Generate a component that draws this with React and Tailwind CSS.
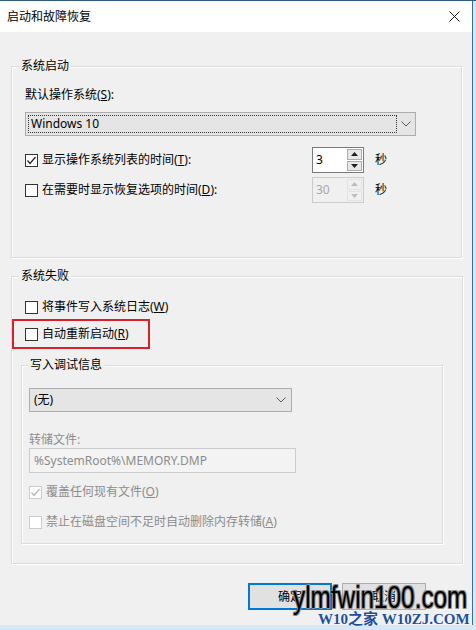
import React from "react";

const font = "font-['Noto_Sans','Noto_Sans_CJK_SC',sans-serif]";

const CheckBox = ({ checked, disabled }) => (
  <svg width="13" height="13" viewBox="0 0 13 13" className="shrink-0">
    <rect
      x="0.5"
      y="0.5"
      width="12"
      height="12"
      fill="#fff"
      stroke={disabled ? "#cccccc" : "#333333"}
    />
    {checked && (
      <polyline
        points="2.5,6.5 5,9.5 10.5,3"
        fill="none"
        stroke={disabled ? "#b5b5b5" : "#222222"}
        strokeWidth="1.2"
      />
    )}
  </svg>
);

const Check = ({ checked, disabled, children, className = "" }) => (
  <div className={`flex items-center h-[16px] ${className}`}>
    <CheckBox checked={checked} disabled={disabled} />
    <span className={`ml-[4px] whitespace-nowrap ${disabled ? "text-[#8c8c8c]" : "text-black"}`}>
      {children}
    </span>
  </div>
);

const Chevron = () => (
  <svg width="10" height="6" viewBox="0 0 10 6">
    <polyline points="0.5,0.5 5,5 9.5,0.5" fill="none" stroke="#5a5a5a" strokeWidth="1" />
  </svg>
);

const Spin = ({ value, disabled }) => (
  <div
    className={`flex h-[26px] w-[52px] border ${
      disabled ? "border-[#cccccc] bg-[#f0f0f0]" : "border-[#7a7a7a] bg-white"
    }`}
  >
    <div className={`flex-1 flex items-center pl-[3px] ${disabled ? "text-[#a8a8a8]" : "text-black"}`}>
      {value}
    </div>
    <div className="w-[17px] flex flex-col p-[1px] gap-[1px]">
      {["up", "down"].map((d) => (
        <div
          key={d}
          className={`flex-1 flex items-center justify-center border ${
            disabled ? "border-[#e3e3e3] bg-[#f0f0f0]" : "border-[#adadad] bg-[#e8e8e8]"
          }`}
        >
          <svg width="7" height="4" viewBox="0 0 7 4">
            <polygon
              points={d === "up" ? "3.5,0 7,4 0,4" : "0,0 7,0 3.5,4"}
              fill={disabled ? "#bdbdbd" : "#202020"}
            />
          </svg>
        </div>
      ))}
    </div>
  </div>
);

const Group = ({ label, labelLeft = "left-[7px]", className = "", children }) => (
  <div className={`relative border border-[#dcdcdc] shadow-[inset_1px_1px_0_#fff,1px_1px_0_#fff] ${className}`}>
    <span className={`absolute -top-[9px] ${labelLeft} px-[2px] bg-[#f0f0f0] leading-[16px]`}>
      {label}
    </span>
    {children}
  </div>
);

export default function App() {
  return (
    <div className={`relative w-[476px] h-[630px] overflow-hidden bg-[#d6e7f5] border-t border-[#2f5b82] text-[12px] leading-[16px] ${font}`}>
      <div className="w-[473px] h-[624px] bg-[#f0f0f0] border-r border-[#3d6a91] flex flex-col">
        {/* title bar */}
        <div className="h-[31px] bg-white flex items-center justify-between pl-[7px] pr-[12px]">
          <span className="text-[12px] text-black">启动和故障恢复</span>
          <svg width="11" height="11" viewBox="0 0 11 11">
            <path d="M0.5 0.5 L10.5 10.5 M10.5 0.5 L0.5 10.5" stroke="#111" strokeWidth="1" />
          </svg>
        </div>

        {/* 系统启动 */}
        <Group label="系统启动" className="mt-[34px] ml-[11px] w-[451px] h-[192px] pt-[20px] pl-[13px]">
          <div>
            默认操作系统(<span className="underline">S</span>):
          </div>
          <div className="mt-[9px] w-[391px] h-[24px] bg-[#e5e5e5] border border-[#adadad] flex items-center">
            <div className="ml-[2px] w-[369px] h-[18px] border border-dotted border-[#333] flex items-center pl-[2px]">
              Windows 10
            </div>
            <div className="flex-1 flex justify-center">
              <Chevron />
            </div>
          </div>
          <div className="mt-[11px] flex items-center h-[26px]">
            <Check checked className="w-[287px]">
              显示操作系统列表的时间(<span className="underline">T</span>):
            </Check>
            <Spin value="3" />
            <span className="ml-[11px]">秒</span>
          </div>
          <div className="mt-[4px] flex items-center h-[26px]">
            <Check className="w-[287px]">
              在需要时显示恢复选项的时间(<span className="underline">D</span>):
            </Check>
            <Spin value="30" disabled />
            <span className="ml-[11px]">秒</span>
          </div>
        </Group>

        {/* 系统失败 */}
        <Group label="系统失败" className="mt-[18px] ml-[11px] w-[452px] h-[288px] pt-[22px] pl-[13px]">
          <Check>
            将事件写入系统日志(<span className="underline">W</span>)
          </Check>
          <div className="mt-[4px] -ml-[13px] w-[138px] h-[30px] border-2 border-[#d8222b] flex items-center pl-[11px]">
            <Check>
              自动重新启动(<span className="underline">R</span>)
            </Check>
          </div>

          <Group
            label="写入调试信息"
            labelLeft="left-[6px]"
            className="mt-[16px] -ml-[4px] w-[422px] h-[179px] pt-[22px] pl-[7px]"
          >
            <div className="w-[263px] h-[24px] bg-[#e5e5e5] border border-[#adadad] flex items-center justify-between pl-[4px] pr-[5px]">
              <span>(无)</span>
              <Chevron />
            </div>
            <div className="mt-[20px] text-[#8c8c8c]">转储文件:</div>
            <div className="w-[267px] h-[25px] bg-[#f3f3f3] border border-[#cccccc] flex items-center pl-[4px] text-[#8c8c8c]">
              %SystemRoot%\MEMORY.DMP
            </div>
            <Check checked disabled className="mt-[11px]">
              覆盖任何现有文件(<span className="underline">O</span>)
            </Check>
            <Check disabled className="mt-[14px]">
              禁止在磁盘空间不足时自动删除内存转储(<span className="underline">A</span>)
            </Check>
          </Group>
        </Group>

        {/* buttons */}
        <div className="mt-[19px] ml-[248px] flex gap-[10px]">
          <button className="w-[84px] h-[27px] bg-[#e1e1e1] border-2 border-[#0078d7] flex items-center justify-center">
            确定
          </button>
          <button className="w-[84px] h-[27px] bg-[#e1e1e1] border border-[#adadad] flex items-center justify-center">
            取消
          </button>
        </div>
      </div>

      {/* watermark */}
      <div className="absolute left-[293px] top-[580px] origin-left scale-x-[0.76] text-[32px] leading-none font-['Liberation_Sans',sans-serif] text-black whitespace-nowrap [text-shadow:1px_1px_0_#8a8a8a,-1px_-1px_0_#8a8a8a,1px_-1px_0_#8a8a8a,-1px_1px_0_#8a8a8a]">
        ylmfwin100.com
      </div>
      <div className="absolute left-[318px] top-[610px] text-[15px] leading-[16px] font-bold font-['Liberation_Serif','Noto_Sans_CJK_SC',serif] text-[#1c4f9c] whitespace-nowrap [text-shadow:0_0_2px_#fff]">
        W10之家 W10ZJ.COM
      </div>
    </div>
  );
}
